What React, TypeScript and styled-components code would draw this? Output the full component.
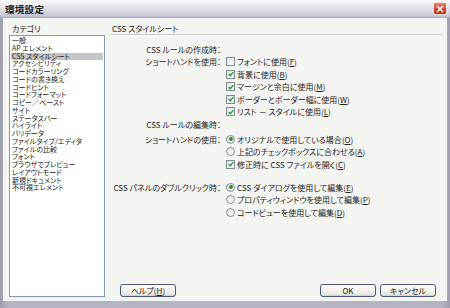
import { FC, ReactNode } from 'react';
import styled, { createGlobalStyle } from 'styled-components';

const GlobalStyle = createGlobalStyle`
  html, body {
    margin: 0;
    padding: 0;
    width: 450px;
    height: 308px;
    overflow: hidden;
    background: #ffffff;
  }
  #root {
    width: 450px;
    height: 308px;
  }
  * {
    box-sizing: border-box;
  }
`;

const categories = [
  '一般',
  'AP エレメント',
  'CSS スタイルシート',
  'アクセシビリティ',
  'コードカラーリング',
  'コードの書き換え',
  'コードヒント',
  'コードフォーマット',
  'コピー／ペースト',
  'サイト',
  'ステータスバー',
  'ハイライト',
  'バリデータ',
  'ファイルタイプ/エディタ',
  'ファイルの比較',
  'フォント',
  'ブラウザでプレビュー',
  'レイアウトモード',
  '新規ドキュメント',
  '不可視エレメント',
];

// text with the underlined access key in brackets
const Label: FC<{ text: string; k: string }> = ({ text, k }) => (
  <>
    {text}(<u>{k}</u>)
  </>
);

const CheckBox: FC<{ checked?: boolean }> = ({ checked }) => (
  <Box>
    {checked && (
      <svg width="6" height="6" viewBox="0 0 6 6">
        <path d="M0.6 3 L2.3 4.7 L5.4 1.1" stroke="#21a121" strokeWidth="1.4" fill="none" />
      </svg>
    )}
  </Box>
);

const Radio: FC<{ checked?: boolean }> = ({ checked }) => (
  <Circle>{checked && <Dot />}</Circle>
);

const Option: FC<{ kind: 'check' | 'radio'; checked?: boolean; children: ReactNode }> = ({
  kind,
  checked,
  children,
}) => (
  <OptionRow>
    {kind === 'check' ? <CheckBox checked={checked} /> : <Radio checked={checked} />}
    <span>{children}</span>
  </OptionRow>
);

const App: FC = () => {
  return (
    <>
      <GlobalStyle />
      <Window>
        <TitleBar>
          <Title>環境設定</Title>
          <CloseButton>
            <svg width="8" height="8" viewBox="0 0 8 8">
              <path d="M1 1 L7 7 M7 1 L1 7" stroke="#fff" strokeWidth="1.6" />
            </svg>
          </CloseButton>
        </TitleBar>
        <Body>
          <Sidebar>
            <SideLabel>カテゴリ</SideLabel>
            <ListBox>
              {categories.map((c) => (
                <ListItem key={c} selected={c === 'CSS スタイルシート'}>
                  {c}
                </ListItem>
              ))}
            </ListBox>
          </Sidebar>
          <Panel>
            <PanelTitle>CSS スタイルシート</PanelTitle>
            <Form>
              <Row>
                <FieldLabel>CSS ルールの作成時：</FieldLabel>
                <span />
              </Row>
              <Row>
                <FieldLabel>ショートハンドを使用：</FieldLabel>
                <Option kind="check">
                  <Label text="フォントに使用" k="F" />
                </Option>
              </Row>
              <Row>
                <span />
                <Option kind="check" checked>
                  <Label text="背景に使用" k="B" />
                </Option>
              </Row>
              <Row>
                <span />
                <Option kind="check" checked>
                  <Label text="マージンと余白に使用" k="M" />
                </Option>
              </Row>
              <Row>
                <span />
                <Option kind="check" checked>
                  <Label text="ボーダーとボーダー幅に使用" k="W" />
                </Option>
              </Row>
              <Row>
                <span />
                <Option kind="check" checked>
                  <Label text="リスト － スタイルに使用" k="L" />
                </Option>
              </Row>
              <Row>
                <FieldLabel>CSS ルールの編集時：</FieldLabel>
                <span />
              </Row>
              <Row gap={2.5}>
                <FieldLabel>ショートハンドの使用：</FieldLabel>
                <Option kind="radio" checked>
                  <Label text="オリジナルで使用している場合" k="O" />
                </Option>
              </Row>
              <Row>
                <span />
                <Option kind="radio">
                  <Label text="上記のチェックボックスに合わせる" k="A" />
                </Option>
              </Row>
              <Row>
                <span />
                <Option kind="check" checked>
                  <Label text="修正時に CSS ファイルを開く" k="C" />
                </Option>
              </Row>
              <Row gap={10.5}>
                <FieldLabel>CSS パネルのダブルクリック時：</FieldLabel>
                <Option kind="radio" checked>
                  <Label text="CSS ダイアログを使用して編集" k="E" />
                </Option>
              </Row>
              <Row>
                <span />
                <Option kind="radio">
                  <Label text="プロパティウィンドウを使用して編集" k="P" />
                </Option>
              </Row>
              <Row>
                <span />
                <Option kind="radio">
                  <Label text="コードビューを使用して編集" k="D" />
                </Option>
              </Row>
            </Form>
            <Footer>
              <Button>
                <Label text="ヘルプ" k="H" />
              </Button>
              <Actions>
                <Button>OK</Button>
                <Button>キャンセル</Button>
              </Actions>
            </Footer>
          </Panel>
        </Body>
      </Window>
    </>
  );
};

const Window = styled.div`
  width: 450px;
  height: 308px;
  display: flex;
  flex-direction: column;
  font-family: 'Noto Sans CJK JP', 'DejaVu Sans', sans-serif;
  font-feature-settings: 'palt';
  font-size: 8px;
  color: #222;
  background: linear-gradient(90deg, #9e9eac, #b4b4c2 2%, #b4b4c2 98%, #9e9eac);
`;

const TitleBar = styled.div`
  height: 18px;
  flex: none;
  display: flex;
  align-items: center;
  justify-content: space-between;
  padding: 0 3px 0 5px;
  background: linear-gradient(#fbfbfd 0%, #e6e6ee 40%, #cfcfdb 85%, #bdbdca 100%);
  border-bottom: 1px solid #b0b0bc;
`;

const Title = styled.div`
  font-size: 9.5px;
  font-weight: bold;
  color: #1a1a1a;
  letter-spacing: 0.3px;
`;

const CloseButton = styled.div`
  width: 14px;
  height: 13px;
  border-radius: 2px;
  border: 1px solid #f4e0dc;
  background: linear-gradient(#e6846c, #c8442e 60%, #b63622);
  display: flex;
  align-items: center;
  justify-content: center;
`;

const Body = styled.div`
  flex: 1;
  display: flex;
  gap: 5px;
  margin: 0 3px 7px 3px;
  padding: 6px 4px 4px 6px;
  background: #f4f4f2;
  min-height: 0;
`;

const Sidebar = styled.div`
  width: 96px;
  display: flex;
  flex-direction: column;
`;

const SideLabel = styled.div`
  height: 11px;
  line-height: 10px;
  padding-left: 3px;
`;

const ListBox = styled.div`
  flex: 1;
  background: #fff;
  border: 1px solid #8c9aab;
  padding: 1px;
  display: flex;
  flex-direction: column;
`;

const ListItem = styled.div<{ selected?: boolean }>`
  height: 7.75px;
  line-height: 7.75px;
  font-size: 7px;
  padding-left: 1px;
  white-space: nowrap;
  background: ${({ selected }) => (selected ? '#c4c4c9' : 'transparent')};
`;

const Panel = styled.div`
  flex: 1;
  display: flex;
  flex-direction: column;
`;

const PanelTitle = styled.div`
  height: 11px;
  line-height: 10px;
  padding-left: 2px;
  border-bottom: 1px solid #c9c9c9;
  box-shadow: 0 1px 0 #ffffff;
`;

const Form = styled.div`
  flex: 1;
  padding-top: 8px;
  display: flex;
  flex-direction: column;
`;

const Row = styled.div<{ gap?: number }>`
  display: grid;
  grid-template-columns: 111px 1fr;
  column-gap: 5px;
  height: 12.5px;
  align-items: center;
  margin-top: ${({ gap }) => gap ?? 0}px;
  white-space: nowrap;
`;

const FieldLabel = styled.span`
  text-align: right;
`;

const OptionRow = styled.label`
  display: flex;
  align-items: center;
  gap: 2px;
`;

const Box = styled.span`
  width: 9px;
  height: 9px;
  border: 1px solid #7f8b98;
  background: linear-gradient(135deg, #e4e4e0, #ffffff);
  display: flex;
  align-items: center;
  justify-content: center;
`;

const Circle = styled.span`
  width: 9px;
  height: 9px;
  border-radius: 50%;
  border: 1px solid #7f8b98;
  background: linear-gradient(135deg, #e4e4e0, #ffffff);
  display: flex;
  align-items: center;
  justify-content: center;
`;

const Dot = styled.span`
  width: 4px;
  height: 4px;
  border-radius: 50%;
  background: #2f8f2f;
`;

const Footer = styled.div`
  display: flex;
  justify-content: space-between;
  align-items: center;
  padding: 0 7px 0 10px;
`;

const Actions = styled.div`
  display: flex;
  gap: 4px;
`;

const Button = styled.div`
  width: 56px;
  height: 13px;
  border: 1px solid #4a5a7a;
  border-radius: 3px;
  background: linear-gradient(#ffffff, #ecebe6 80%, #d6d0c5);
  display: flex;
  align-items: center;
  justify-content: center;
  line-height: 1;
`;

export default App;
